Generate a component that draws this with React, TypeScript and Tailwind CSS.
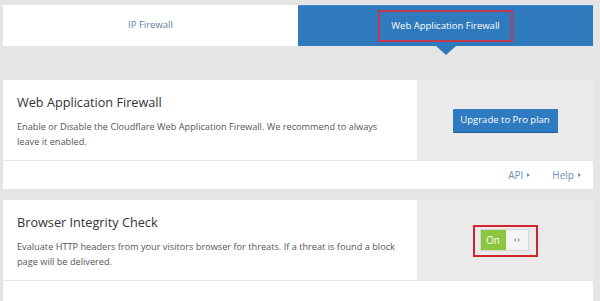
import React from 'react';

const font = { fontFamily: '"Open Sans", "Liberation Sans", sans-serif' };

const Card: React.FC<{ title: string; text: string; side: React.ReactNode; footer?: React.ReactNode }> = ({
  title,
  text,
  side,
  footer,
}) => (
  <div className="bg-white">
    <div className="flex h-[80px]">
      <div className="w-[414px] pl-[14px] pr-[18px] pt-[13px]">
        <h2 className="text-[12.7px] leading-[18px] text-[#333]">{title}</h2>
        <p className="mt-[9px] text-[9.2px] leading-[14.5px] text-[#555]">{text}</p>
      </div>
      <div className="flex flex-1 items-center justify-center bg-[#ebebeb]">{side}</div>
    </div>
    <div className="flex h-[29px] items-center justify-end gap-[22px] border-t border-[#e6e6e6] pr-[12px]">
      {footer}
    </div>
  </div>
);

const LinkArrow: React.FC<{ label: string }> = ({ label }) => (
  <span className="flex items-center gap-[4px] text-[10px] text-[#6b8fbd]">
    {label}
    <span className="h-0 w-0 border-y-[2.5px] border-l-[3px] border-y-transparent border-l-[#6b8fbd]" />
  </span>
);

export default function App() {
  return (
    <div className="h-[301px] w-[600px] overflow-hidden bg-[#e5e5e5] px-[3px] pt-[5px]" style={font}>
      {/* tabs */}
      <div className="flex h-[41px] w-[590px]">
        <div className="flex w-[295px] items-center justify-center bg-white text-[9.5px] text-[#5b7fa6]">
          IP Firewall
        </div>
        <div className="relative flex flex-1 items-center justify-center border-t border-[#4a8fcf] bg-[#2f79bd]">
          <span className="border-2 border-[#c23a4f] px-[11px] py-[7px] text-[9.5px] text-white">
            Web Application Firewall
          </span>
          <span className="absolute top-full left-1/2 h-0 w-0 -translate-x-1/2 border-x-[10px] border-t-[9px] border-x-transparent border-t-[#2f79bd]" />
        </div>
      </div>

      <div className="mt-[34px] flex w-[590px] flex-col gap-[11px]">
        <Card
          title="Web Application Firewall"
          text="Enable or Disable the Cloudflare Web Application Firewall. We recommend to always leave it enabled."
          side={
            <button className="h-[23px] w-[105px] rounded-[1px] bg-[#2f7bc1] text-[9.5px] text-white shadow-[0_1px_0_#1f5f99]">
              Upgrade to Pro plan
            </button>
          }
          footer={
            <>
              <LinkArrow label="API" />
              <LinkArrow label="Help" />
            </>
          }
        />
        <Card
          title="Browser Integrity Check"
          text="Evaluate HTTP headers from your visitors browser for threats. If a threat is found a block page will be delivered."
          side={
            <div className="mt-[2px] border-2 border-[#d0252d] pt-[2px] pb-[4px] pl-[5px] pr-[7px]">
              <div className="flex h-[22px] w-[49px] border border-[#d5d5d5] bg-[#f4f4f4]">
                <span className="flex w-[25px] items-center justify-center bg-[#8cc63f] text-[10px] text-white">On</span>
                <span className="flex flex-1 items-center justify-center gap-[2px]">
                  <span className="h-0 w-0 border-y-[2px] border-r-[2px] border-y-transparent border-r-[#999]" />
                  <span className="h-0 w-0 border-y-[2px] border-l-[2px] border-y-transparent border-l-[#999]" />
                </span>
              </div>
            </div>
          }
        />
      </div>
    </div>
  );
}
